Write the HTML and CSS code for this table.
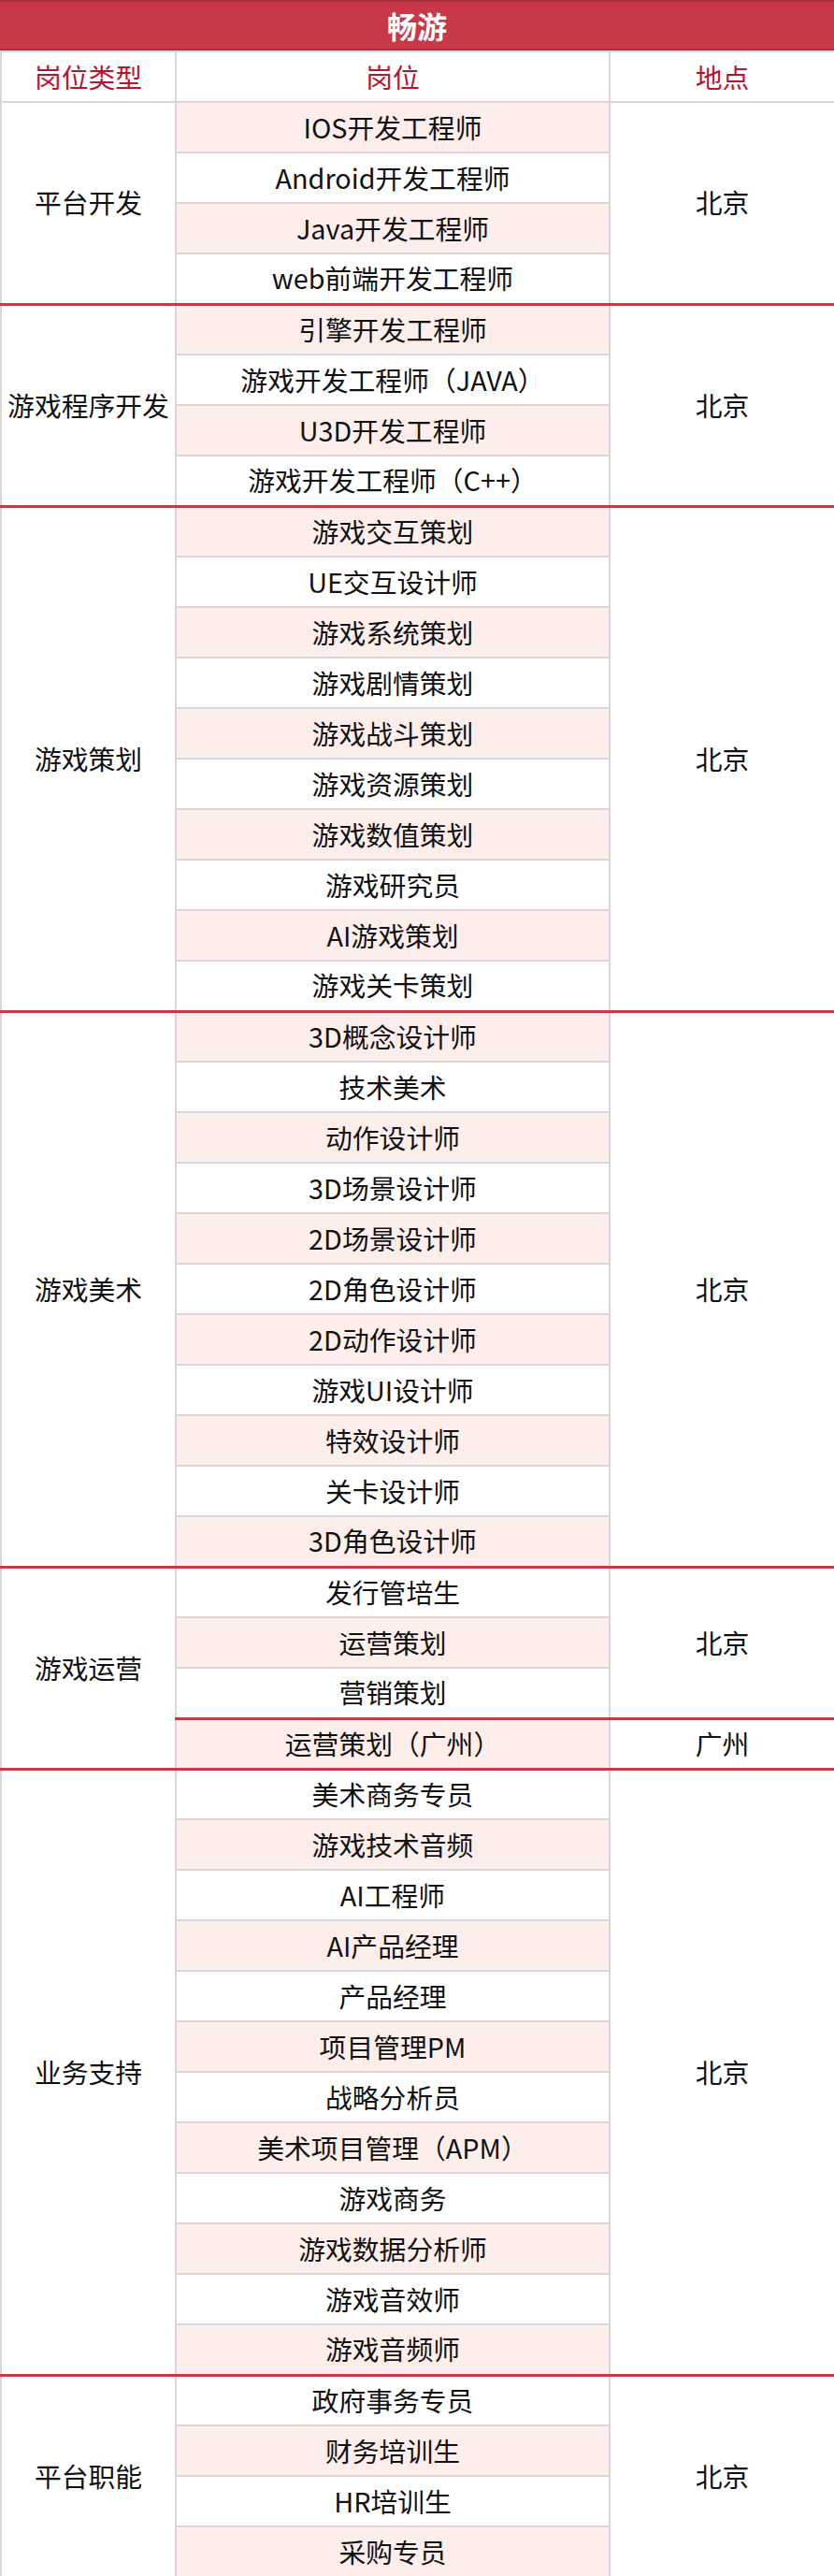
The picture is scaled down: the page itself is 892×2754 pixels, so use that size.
FILE: index.html
```html
<!DOCTYPE html>
<html lang="zh-CN">
<head>
<meta charset="utf-8">
<title>畅游</title>
<link rel="stylesheet" href="styles.css">
</head>
<body>
<div class="title">畅游</div>
<table class="jobs">
  <colgroup>
    <col class="c-type">
    <col class="c-job">
    <col class="c-loc">
  </colgroup>
  <thead>
    <tr><th>岗位类型</th><th>岗位</th><th>地点</th></tr>
  </thead>
  <tbody>
    <tr><td class="type" rowspan="4">平台开发</td><td class="job odd">IOS开发工程师</td><td class="loc" rowspan="4">北京</td></tr>
    <tr><td class="job">Android开发工程师</td></tr>
    <tr><td class="job odd">Java开发工程师</td></tr>
    <tr><td class="job">web前端开发工程师</td></tr>

    <tr class="grp"><td class="type" rowspan="4">游戏程序开发</td><td class="job odd">引擎开发工程师</td><td class="loc" rowspan="4">北京</td></tr>
    <tr><td class="job">游戏开发工程师（JAVA）</td></tr>
    <tr><td class="job odd">U3D开发工程师</td></tr>
    <tr><td class="job">游戏开发工程师（C++）</td></tr>

    <tr class="grp"><td class="type" rowspan="10">游戏策划</td><td class="job odd">游戏交互策划</td><td class="loc" rowspan="10">北京</td></tr>
    <tr><td class="job">UE交互设计师</td></tr>
    <tr><td class="job odd">游戏系统策划</td></tr>
    <tr><td class="job">游戏剧情策划</td></tr>
    <tr><td class="job odd">游戏战斗策划</td></tr>
    <tr><td class="job">游戏资源策划</td></tr>
    <tr><td class="job odd">游戏数值策划</td></tr>
    <tr><td class="job">游戏研究员</td></tr>
    <tr><td class="job odd">AI游戏策划</td></tr>
    <tr><td class="job">游戏关卡策划</td></tr>

    <tr class="grp"><td class="type" rowspan="11">游戏美术</td><td class="job odd">3D概念设计师</td><td class="loc" rowspan="11">北京</td></tr>
    <tr><td class="job">技术美术</td></tr>
    <tr><td class="job odd">动作设计师</td></tr>
    <tr><td class="job">3D场景设计师</td></tr>
    <tr><td class="job odd">2D场景设计师</td></tr>
    <tr><td class="job">2D角色设计师</td></tr>
    <tr><td class="job odd">2D动作设计师</td></tr>
    <tr><td class="job">游戏UI设计师</td></tr>
    <tr><td class="job odd">特效设计师</td></tr>
    <tr><td class="job">关卡设计师</td></tr>
    <tr><td class="job odd">3D角色设计师</td></tr>

    <tr class="grp"><td class="type" rowspan="4">游戏运营</td><td class="job">发行管培生</td><td class="loc" rowspan="3">北京</td></tr>
    <tr><td class="job odd">运营策划</td></tr>
    <tr><td class="job">营销策划</td></tr>
    <tr class="sub"><td class="job odd">运营策划（广州）</td><td class="loc">广州</td></tr>

    <tr class="grp"><td class="type" rowspan="12">业务支持</td><td class="job">美术商务专员</td><td class="loc" rowspan="12">北京</td></tr>
    <tr><td class="job odd">游戏技术音频</td></tr>
    <tr><td class="job">AI工程师</td></tr>
    <tr><td class="job odd">AI产品经理</td></tr>
    <tr><td class="job">产品经理</td></tr>
    <tr><td class="job odd">项目管理PM</td></tr>
    <tr><td class="job">战略分析员</td></tr>
    <tr><td class="job odd">美术项目管理（APM）</td></tr>
    <tr><td class="job">游戏商务</td></tr>
    <tr><td class="job odd">游戏数据分析师</td></tr>
    <tr><td class="job">游戏音效师</td></tr>
    <tr><td class="job odd">游戏音频师</td></tr>

    <tr class="grp"><td class="type" rowspan="4">平台职能</td><td class="job">政府事务专员</td><td class="loc" rowspan="4">北京</td></tr>
    <tr><td class="job odd">财务培训生</td></tr>
    <tr><td class="job">HR培训生</td></tr>
    <tr><td class="job odd">采购专员</td></tr>
  </tbody>
</table>
</body>
</html>
```
FILE: styles.css
```css
html, body {
  margin: 0;
  padding: 0;
  background: #ffffff;
}

body {
  width: 892px;
  font-family: "Noto Sans CJK SC", "Noto Sans", sans-serif;
  color: #111111;
}

.title {
  box-sizing: border-box;
  height: 54px;
  background: #c93849;
  border-top: 2px solid #a8303e;
  border-bottom: 2px solid #b1313f;
  color: #ffffff;
  font-size: 32px;
  font-weight: 700;
  line-height: 50px;
  text-align: center;
}

.jobs {
  width: 892px;
  border-collapse: collapse;
  table-layout: fixed;
}

.c-type { width: 187px; }
.c-job { width: 464px; }
.c-loc { width: 241px; }

.jobs th,
.jobs td {
  border: 2px solid #dad6d6;
  padding: 0;
  text-align: center;
  vertical-align: middle;
  font-size: 28.8px;
  font-weight: 400;
  line-height: 1;
  white-space: nowrap;
}

.jobs thead tr { height: 54px; }
.jobs tbody tr { height: 54px; }

.jobs th {
  color: #b8142f;
  background: #ffffff;
}

.jobs td.odd {
  background: #fdeeec;
}

.jobs tr.grp td,
.jobs tr.sub td {
  border-top: 3px solid #c93849;
}
```
